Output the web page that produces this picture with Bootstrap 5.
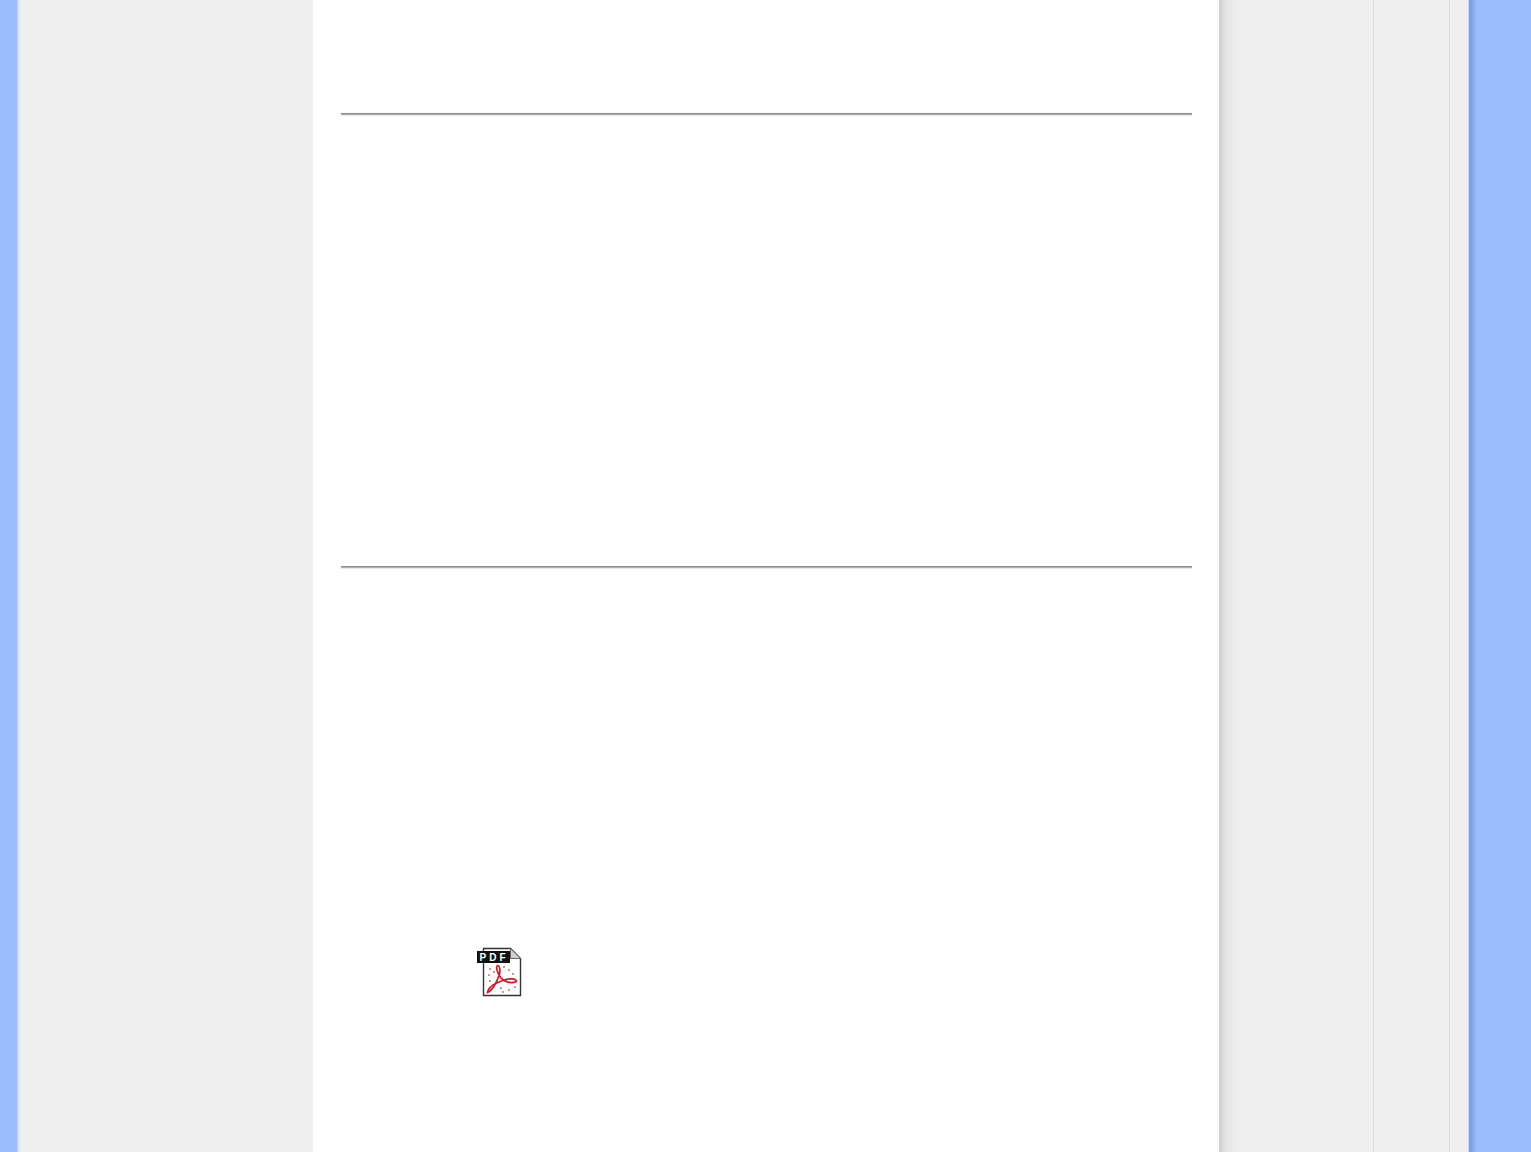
<!DOCTYPE html>
<html lang="en">
<head>
    <meta charset="UTF-8">
    <title>Manual page</title>
    <link href="https://cdn.jsdelivr.net/npm/bootstrap@5.3.3/dist/css/bootstrap.min.css" rel="stylesheet">
    <style>
        html, body { height: 100%; overflow: hidden; }
        body { background: #efefef; }

        .page-shell { height: 1152px; }

        /* blue page edges */
        .edge-left { flex: none; width: 17px; background: #9cbcfb; }
        .edge-fade-left { flex: none; width: 4px; background: linear-gradient(90deg, #b5cdfb, #dfe8f8 50%, #efefef); }
        .edge-right { flex: none; width: 63px; background: linear-gradient(90deg, #c4d6fa 0, #c4d6fa 1px, #7f9fe8 1px, #7f9fe8 3px, #9cbcfb 9px); }

        .side-left { flex: none; width: 292px; }

        .sheet { flex: none; width: 906px; padding: 0 27px 0 28px; background: #fff; }
        .sheet-rule { height: 3px; margin: 0; opacity: 1; border: 0; background: linear-gradient(#8a8a8a 0, #8a8a8a 1px, #b0b0b0 1px, #b0b0b0 2px, #e8e8e8 2px); }
        .rule-one { margin-top: 113px; }
        .rule-two { margin-top: 450px; }

        .pdf-link { display: block; width: 46px; height: 50px; margin: 378px 0 0 135px; }
        .pdf-label { font: bold 10px "Liberation Sans", Arial, sans-serif; letter-spacing: 3px; fill: #fff; }

        .side-shadow { flex: none; width: 18px; background: linear-gradient(90deg, #cfcfcf, #e4e4e4 40%, #efefef); }
        .side-a { flex: none; width: 137px; border-right: 1px solid #d5deee; }
        .side-b { flex: none; width: 76px; border-right: 1px solid #d5deee; }
        .side-c { flex: none; width: 18px; }
    </style>
</head>

<body>
    <div class="page-shell d-flex">
        <div class="edge-left"></div>
        <div class="edge-fade-left"></div>
        <div class="side-left"></div>

        <div class="sheet">
            <hr class="sheet-rule rule-one">
            <hr class="sheet-rule rule-two">
            <a class="pdf-link" href="#">
                <svg width="46" height="50" viewBox="0 0 46 50">
                    <path d="M7.5 1.5H34.5L44.5 11.5V48.5H7.5Z" fill="#fff" stroke="#333" stroke-width="1.4"/>
                    <path d="M34.5 1.5V11.5H44.5Z" fill="#cfcfcf" stroke="#666"/>
                    <rect x="1" y="4" width="33" height="12" fill="#111"/>
                    <text class="pdf-label" x="3.5" y="13.6">PDF</text>
                    <path d="M11.5 45.5C16 44 21 35 23.5 27C24.5 22 23.5 18.5 21.5 18.5C19.5 19 21 26 25 31C28 35 35 37 40.5 34.5C41 31.5 33 31 27 33.5C20 35.5 12 40 11.5 45.5Z" fill="none" stroke="#d01a24" stroke-width="1.7"/>
                    <g fill="#c4806c">
                        <circle cx="14" cy="22" r="1.1"/><circle cx="13" cy="28" r="1.1"/><circle cx="14" cy="34" r="1.1"/>
                        <circle cx="16" cy="40" r="1.1"/><circle cx="28" cy="20" r="1.1"/><circle cx="33" cy="23" r="1.1"/>
                        <circle cx="37" cy="27" r="1.1"/><circle cx="39" cy="40" r="1.1"/><circle cx="33" cy="43" r="1.1"/>
                        <circle cx="27" cy="45" r="1.1"/><circle cx="25" cy="41" r="1.1"/><circle cx="18" cy="25" r="1.1"/>
                    </g>
                </svg>
            </a>
        </div>

        <div class="side-shadow"></div>
        <div class="side-a"></div>
        <div class="side-b"></div>
        <div class="side-c"></div>
        <div class="edge-right"></div>
    </div>

    <script src="https://cdn.jsdelivr.net/npm/bootstrap@5.3.3/dist/js/bootstrap.bundle.min.js"></script>
</body>
</html>
